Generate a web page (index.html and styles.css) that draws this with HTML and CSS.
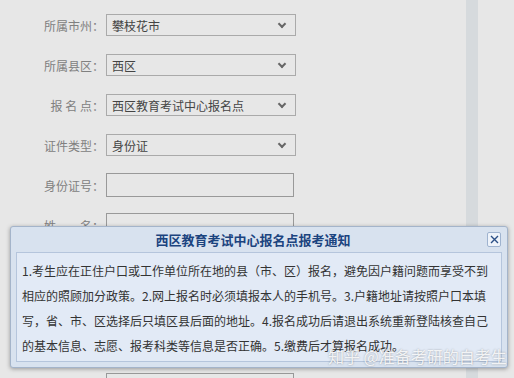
FILE: index.html
```html
<!DOCTYPE html>
<html lang="zh-CN">
<head>
  <meta charset="UTF-8" />
  <meta name="viewport" content="width=device-width, initial-scale=1.0"/>
  <title>报名信息</title>
  <link rel="stylesheet" href="styles.css">
</head>
<body>
  <div class="page">
    <form class="form">
      <div class="row">
        <label class="label">所属市州：</label>
        <div class="select"><span>攀枝花市</span><i class="arrow"></i></div>
      </div>
      <div class="row">
        <label class="label">所属县区：</label>
        <div class="select"><span>西区</span><i class="arrow"></i></div>
      </div>
      <div class="row">
        <label class="label">报 名 点：</label>
        <div class="select"><span>西区教育考试中心报名点</span><i class="arrow"></i></div>
      </div>
      <div class="row">
        <label class="label">证件类型：</label>
        <div class="select"><span>身份证</span><i class="arrow"></i></div>
      </div>
      <div class="row">
        <label class="label">身份证号：</label>
        <input class="input" type="text" />
      </div>
      <div class="row">
        <label class="label">姓　　名：</label>
        <input class="input" type="text" />
      </div>
      <div class="row">
        <label class="label">性　　别：</label>
        <input class="input" type="text" />
      </div>
      <div class="row">
        <label class="label">民　　族：</label>
        <input class="input" type="text" />
      </div>
      <div class="row">
        <label class="label">出生日期：</label>
        <input class="input" type="text" />
      </div>
      <div class="row">
        <label class="label">联系电话：</label>
        <input class="input" type="text" />
      </div>
    </form>
    <div class="side-bar"></div>
  </div>

  <!-- 报考通知弹窗 -->
  <div class="dialog">
    <div class="dialog-title">
      <h3>西区教育考试中心报名点报考通知</h3>
      <span class="close">
        <svg width="9" height="9" viewBox="0 0 9 9"><path d="M1 1L8 8M8 1L1 8" stroke="#2b4f86" stroke-width="1.4"/></svg>
      </span>
    </div>
    <div class="dialog-body">
      1.考生应在正住户口或工作单位所在地的县（市、区）报名，避免因户籍问题而享受不到相应的照顾加分政策。2.网上报名时必须填报本人的手机号。3.户籍地址请按照户口本填写，省、市、区选择后只填区县后面的地址。4.报名成功后请退出系统重新登陆核查自己的基本信息、志愿、报考科类等信息是否正确。5.缴费后才算报名成功。
    </div>
  </div>

  <div class="watermark">知乎 @准备考研的自考生</div>
</body>
</html>
```

FILE: styles.css
```css
body {
  margin: 0;
  padding: 0;
  background: #e7e7e7;
  font-family: "Noto Sans CJK SC", "Liberation Sans", sans-serif;
  font-size: 12px;
  color: #333;
  height: 378px;
  overflow: hidden;
}

.page {
  display: flex;
  height: 100%;
}

.form {
  width: 466px;
  padding-top: 5px;
}

.row {
  display: flex;
  align-items: center;
  height: 40px;
}

.label {
  width: 104px;
  text-align: right;
  color: #808080;
  margin-right: 2px;
  white-space: pre;
}

.select {
  width: 173px;
  height: 20px;
  border: 1px solid #aaa;
  display: flex;
  align-items: center;
  justify-content: space-between;
  padding: 0 10px 0 5px;
  color: #444;
}

.arrow {
  width: 4px;
  height: 4px;
  border-right: 2px solid #666;
  border-bottom: 2px solid #666;
  transform: rotate(45deg);
  margin-top: -3px;
}

.input {
  width: 186px;
  height: 22px;
  margin: 0;
  padding: 0;
  border: 1px solid #999;
  background: #e7e7e7;
}

.side-bar {
  width: 12px;
  background: #d6dadd;
}

.dialog {
  position: absolute;
  left: 10px;
  top: 226px;
  width: 498px;
  height: 142px;
  box-sizing: border-box;
  background: #d8e2ef;
  border: 1px solid #a4b4ca;
  border-radius: 3px;
  box-shadow: 0 1px 4px rgba(0, 0, 0, 0.35);
  padding: 0 5px 5px;
}

.dialog-title {
  height: 25px;
  display: flex;
  align-items: center;
  justify-content: center;
  position: relative;
}

.dialog-title h3 {
  margin: 0 0 0 -12px;
  font-size: 13px;
  color: #1c447f;
  font-weight: bold;
}

.close {
  position: absolute;
  right: 1px;
  top: 5px;
  width: 12px;
  height: 13px;
  border: 1px solid #9fb3cf;
  background: #eef3fa;
  border-radius: 2px;
  display: flex;
  align-items: center;
  justify-content: center;
}

.dialog-body {
  height: 110px;
  box-sizing: border-box;
  background: #e2eaf6;
  border: 1px solid #b5c5dc;
  padding: 5px 5px 0;
  line-height: 25px;
  color: #333;
}

.watermark {
  position: absolute;
  left: 328px;
  top: 344px;
  font-size: 16px;
  color: rgba(255, 255, 255, 0.85);
  text-shadow: 0 0 2px rgba(0, 0, 0, 0.35);
  white-space: nowrap;
}
```
